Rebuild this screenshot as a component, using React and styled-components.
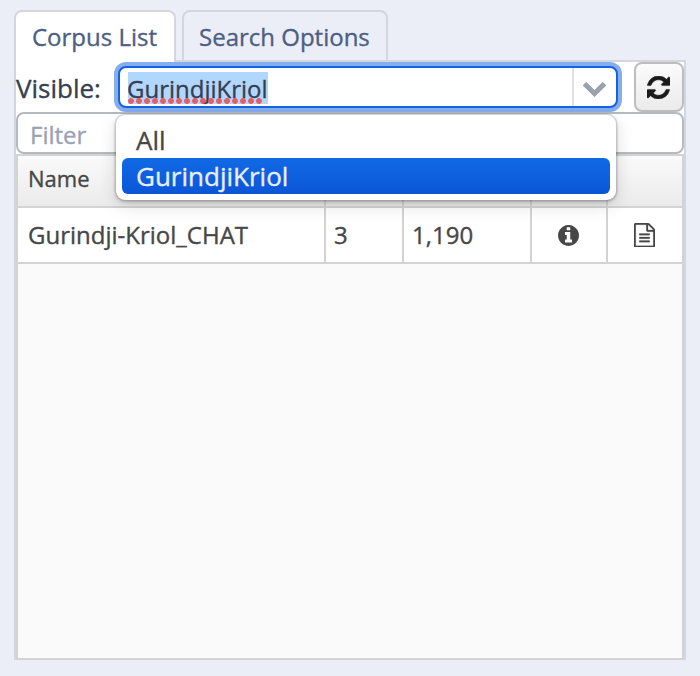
import React from "react";
import styled, { createGlobalStyle } from "styled-components";

const GlobalStyle = createGlobalStyle`
  *, *::before, *::after { box-sizing: border-box; }
  body {
    margin: 0;
    background: #ebeef7;
    font-family: "Open Sans", "Noto Sans", sans-serif;
    -webkit-text-stroke: 0.35px currentColor;
  }
`;

const Page = styled.main`
  width: 700px;
  height: 676px;
  padding: 10px 14px 16px;
  display: flex;
  flex-direction: column;
  overflow: hidden;
`;

const TabList = styled.div`
  display: flex;
  gap: 6px;
  height: 50px;
  flex: none;
  z-index: 1;
`;

const Tab = styled.div`
  width: ${(p) => p.$width}px;
  height: ${(p) => (p.$active ? 52 : 50)}px;
  padding-left: ${(p) => (p.$active ? 16 : 15)}px;
  border: 2px solid #d3d6df;
  border-bottom: 0;
  border-radius: 8px 8px 0 0;
  background: ${(p) => (p.$active ? "#fff" : "#ebeef7")};
  color: #4d5f84;
  font-size: 24px;
  line-height: 50px;
  white-space: nowrap;
`;

const Panel = styled.section`
  flex: 1;
  display: flex;
  flex-direction: column;
  border: 2px solid #d3d6df;
  border-bottom: 0;
  background: #fff;
`;

const VisibleRow = styled.div`
  display: flex;
  height: 50px;
  flex: none;
`;

const Label = styled.label`
  width: 102px;
  flex: none;
  color: #363e50;
  font-size: 26px;
  line-height: 52px;
  white-space: nowrap;
`;

const Combo = styled.div`
  position: relative;
  display: flex;
  width: 500px;
  height: 42px;
  margin-top: 4px;
  border: 2px solid #1463e3;
  border-radius: 8px;
  background: #fff;
  box-shadow: 0 0 0 4px #84aef0;
`;

const ComboValue = styled.div`
  flex: 1;
  padding: 4px 0 0 8px;
`;

const Selection = styled.span`
  position: relative;
  display: block;
  width: 140px;
  height: 32px;
  background: #b2d7ff;
  color: #363e50;
  font-size: 24px;
  line-height: 34px;
  text-indent: -1px;
  white-space: nowrap;
`;

const SpellingDots = styled.i`
  position: absolute;
  left: 0;
  bottom: 0;
  width: 136px;
  height: 6px;
  background: radial-gradient(circle at 3px 3px, #ee4c50e0 2.5px, #ee4c5000 3.3px) 0 0 / 8px 6px;
`;

const ComboArrow = styled.div`
  width: 44px;
  padding-right: 2px;
  border-left: 2px solid #e0e1e4;
  display: flex;
  align-items: center;
  justify-content: center;
  color: #9ba2ae;
  svg { margin-top: 5px; }
`;

const Menu = styled.div`
  position: absolute;
  z-index: 2;
  left: -4px;
  top: 47px;
  width: 500px;
  height: 85px;
  padding: 7px 6px 6px;
  border-radius: 9px;
  background: #fff;
  box-shadow: 0 0 0 1.5px #0000001c, 0 2px 4px #00000030, 0 5px 18px #00000024;
`;

const Option = styled.div`
  height: 36px;
  padding-left: 14px;
  border-radius: 6px;
  background: ${(p) => (p.$selected ? "linear-gradient(#1169e5, #0b56d7)" : "transparent")};
  color: ${(p) => (p.$selected ? "#e8effc" : "#474747")};
  font-size: 26px;
  line-height: 36px;
  white-space: nowrap;
`;

const RefreshButton = styled.button`
  width: 50px;
  height: 50px;
  margin-left: auto;
  padding: 0;
  display: flex;
  align-items: center;
  justify-content: center;
  border: 2px solid #bdbdbd;
  border-radius: 8px;
  background: linear-gradient(#fbfbfb, #ebebeb);
  color: #1b1b1b;
  svg { margin-right: 2px; }
`;

const Filter = styled.div`
  height: 42px;
  flex: none;
  padding-left: 12px;
  border: 2px solid #b5bac0;
  border-radius: 8px;
  color: #98a2b4;
  font-size: 24px;
  line-height: 41px;
`;

const Grid = styled.div`
  flex: 1;
  border: 2px solid #d3d3d3;
  background: #fafafa;
`;

const GridRow = styled.div`
  display: grid;
  grid-template-columns: 308px 78px 128px 76px 76px;
  height: ${(p) => (p.$header ? 52 : 56)}px;
  border-bottom: 2px solid #d3d3d3;
  background: ${(p) => (p.$header ? "linear-gradient(#fafafa, #ebebeb)" : "#fff")};
  overflow: hidden;
`;

const Cell = styled.div`
  display: flex;
  align-items: center;
  padding-left: ${(p) => p.$inset || 8}px;
  border-right: 2px solid #d3d3d3;
  color: #474747;
  font-size: 24px;
  line-height: 1;
  white-space: nowrap;
  &:last-child { border-right: 0; }
`;

const HeaderCell = styled(Cell)`
  padding-bottom: 7px;
  font-size: 22px;
`;

const IconCell = styled(Cell)`
  padding-left: 26px;
`;

const Glyph = styled.svg`
  display: block;
  flex: none;
  fill: currentColor;
`;

const RefreshIcon = () => (
  <Glyph width="23" height="23" viewBox="0 128 1536 1536">
    <path stroke="currentColor" strokeWidth="30" d="M1511 1056q0 5-1 7-64 268-268 434.5t-478 166.5q-146 0-282.5-55t-243.5-157l-129 129q-19 19-45 19t-45-19-19-45v-448q0-26 19-45t45-19h448q26 0 45 19t19 45-19 45l-137 137q71 66 161 102t187 36q134 0 250-65t186-179q11-17 53-117 8-23 30-23h192q13 0 22.5 9.5t9.5 22.5zm25-800v448q0 26-19 45t-45 19h-448q-26 0-45-19t-19-45 19-45l138-138q-148-137-349-137-134 0-250 65t-186 179q-11 17-53 117-8 23-30 23h-199q-13 0-22.5-9.5t-9.5-22.5v-7q65-268 270-434.5t480-166.5q146 0 284 55.5t245 156.5l130-129q19-19 45-19t45 19 19 45z" />
  </Glyph>
);

const InfoIcon = () => (
  <Glyph width="21" height="21" viewBox="0 128 1536 1536">
    <path d="M1024 1376v-160q0-14-9-23t-23-9h-96v-512q0-14-9-23t-23-9h-320q-14 0-23 9t-9 23v160q0 14 9 23t23 9h96v320h-96q-14 0-23 9t-9 23v160q0 14 9 23t23 9h448q14 0 23-9t9-23zm-128-896v-160q0-14-9-23t-23-9h-192q-14 0-23 9t-9 23v160q0 14 9 23t23 9h192q14 0 23-9t9-23zm640 416q0 209-103 385.5t-279.5 279.5-385.5 103-385.5-103-279.5-279.5-103-385.5 103-385.5 279.5-279.5 385.5-103 385.5 103 279.5 279.5 103 385.5z" />
  </Glyph>
);

const FileIcon = () => (
  <Glyph width="21" height="24.5" viewBox="0 0 1536 1792">
    <path stroke="currentColor" strokeWidth="16" d="M1468 380q28 28 48 76t20 88v1152q0 40-28 68t-68 28h-1344q-40 0-68-28t-28-68v-1600q0-40 28-68t68-28h896q40 0 88 20t76 48zm-444-244v376h376q-10-29-22-41l-313-313q-12-12-41-22zm384 1528v-1024h-416q-40 0-68-28t-28-68v-416h-768v1536h1280zm-1024-864q0-14 9-23t23-9h704q14 0 23 9t9 23v64q0 14-9 23t-23 9h-704q-14 0-23-9t-9-23v-64zm736 224q14 0 23 9t9 23v64q0 14-9 23t-23 9h-704q-14 0-23-9t-9-23v-64q0-14 9-23t23-9h704zm0 256q14 0 23 9t9 23v64q0 14-9 23t-23 9h-704q-14 0-23-9t-9-23v-64q0-14 9-23t23-9h704z" />
  </Glyph>
);

const ChevronIcon = () => (
  <Glyph width="23" height="15" viewBox="90 533 1612 1035">
    <path d="M1683 808l-742 741q-19 19-45 19t-45-19l-742-741q-19-19-19-45.5t19-45.5l166-165q19-19 45-19t45 19l531 531 531-531q19-19 45-19t45 19l166 165q19 19 19 45.5t-19 45.5z" />
  </Glyph>
);

export default function App() {
  return (
    <>
      <GlobalStyle />
      <Page>
        <TabList>
          <Tab $active $width={162}>Corpus List</Tab>
          <Tab $width={206}>Search Options</Tab>
        </TabList>
        <Panel>
          <VisibleRow>
            <Label>Visible:</Label>
            <Combo>
              <ComboValue>
                <Selection>GurindjiKriol<SpellingDots /></Selection>
              </ComboValue>
              <ComboArrow><ChevronIcon /></ComboArrow>
              <Menu>
                <Option>All</Option>
                <Option $selected>GurindjiKriol</Option>
              </Menu>
            </Combo>
            <RefreshButton aria-label="Refresh"><RefreshIcon /></RefreshButton>
          </VisibleRow>
          <Filter>Filter</Filter>
          <Grid>
            <GridRow $header>
              <HeaderCell $inset={10}>Name</HeaderCell>
              <HeaderCell />
              <HeaderCell />
              <HeaderCell />
              <HeaderCell />
            </GridRow>
            <GridRow>
              <Cell $inset={10}>Gurindji-Kriol_CHAT</Cell>
              <Cell>3</Cell>
              <Cell>1,190</Cell>
              <IconCell><InfoIcon /></IconCell>
              <IconCell><FileIcon /></IconCell>
            </GridRow>
          </Grid>
        </Panel>
      </Page>
    </>
  );
}
